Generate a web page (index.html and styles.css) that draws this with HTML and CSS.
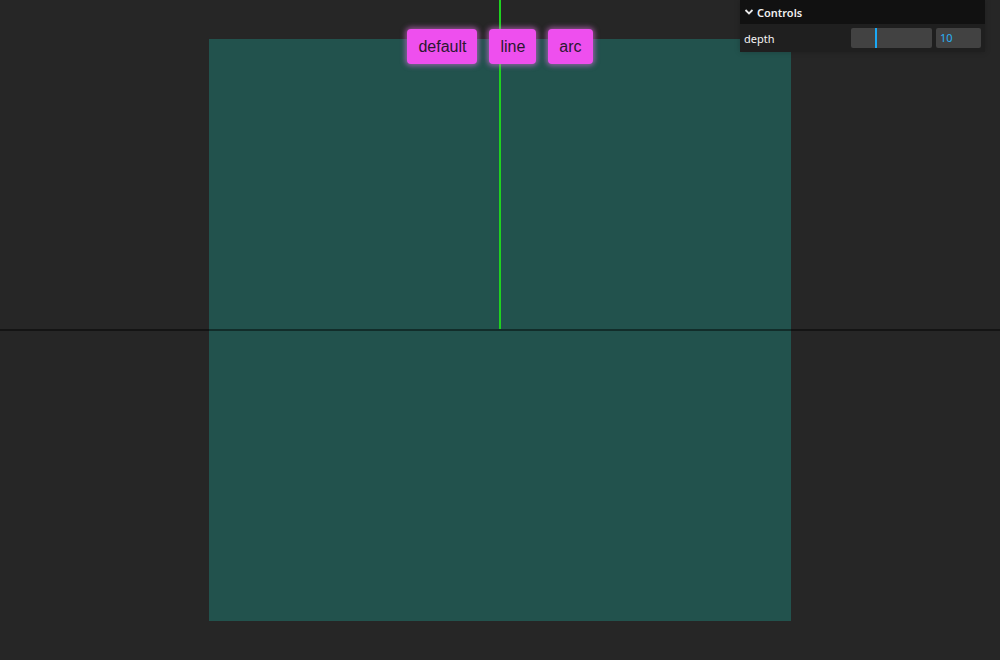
FILE: index.html
```html
<!DOCTYPE html>
<html>
<head>
<meta charset="utf-8">
<link rel="stylesheet" href="styles.css">
</head>
<body>
<div class="stage">
  <div class="square"></div>
  <div class="axis-h"></div>
  <div class="axis-v"></div>
  <div class="buttons">
    <button class="btn">default</button>
    <button class="btn">line</button>
    <button class="btn">arc</button>
  </div>
  <div class="panel">
    <div class="panel-head">
      <svg class="chev" width="10" height="10" viewBox="0 0 10 10"><path d="M1.5 3 L5 6.5 L8.5 3" fill="none" stroke="#e8e8e8" stroke-width="1.8"/></svg>
      <span>Controls</span>
    </div>
    <div class="panel-row">
      <span class="label">depth</span>
      <div class="slider"><div class="knob"></div></div>
      <div class="num">10</div>
    </div>
  </div>
</div>
</body>
</html>
```
FILE: styles.css
```css
html, body {
  margin: 0;
  padding: 0;
  width: 1000px;
  height: 660px;
  background: #262626;
  overflow: hidden;
}
.stage {
  position: relative;
  width: 1000px;
  height: 660px;
  display: flex;
  align-items: center;
  justify-content: center;
}
.square {
  width: 582px;
  height: 582px;
  background: #22524d;
}
.axis-h {
  position: absolute;
  left: 0;
  top: 329px;
  width: 1000px;
  height: 2px;
  background: rgba(0, 0, 0, 0.45);
}
.axis-v {
  position: absolute;
  left: 499px;
  top: 0;
  width: 2px;
  height: 329px;
  background: #1fd11f;
}
.buttons {
  position: absolute;
  top: 29px;
  left: 0;
  width: 1000px;
  display: flex;
  justify-content: center;
  gap: 12px;
}
.btn {
  font-family: "Liberation Sans", Arial, sans-serif;
  font-size: 16px;
  line-height: 19px;
  color: #2a1830;
  background: #ee4fee;
  border: none;
  border-radius: 4px;
  padding: 8px 11px;
  height: 35px;
  box-shadow: 0 0 5px 2px rgba(238, 120, 238, 0.5);
}
.panel {
  position: absolute;
  top: 0;
  left: 740px;
  width: 245px;
  background: #1f1f1f;
  font-family: "Noto Sans", "Open Sans", sans-serif;
  font-size: 11px;
  color: #e8e8e8;
  box-shadow: 0 0 6px rgba(0,0,0,0.2);
}
.panel-head {
  height: 24px;
  background: #111111;
  display: flex;
  align-items: center;
  gap: 3px;
  padding-left: 4px;
  font-weight: 600;
  color: #f0f0f0;
}
.chev { display: block; }
.panel-row {
  height: 28px;
  display: flex;
  align-items: center;
  padding: 0 4px;
}
.label {
  flex: 1;
  color: #f4f4f4;
}
.slider {
  position: relative;
  width: 81px;
  height: 20px;
  background: #424242;
  border-radius: 2px;
}
.knob {
  position: absolute;
  left: 24px;
  top: 0;
  width: 2px;
  height: 20px;
  background: #1aa8f5;
}
.num {
  width: 41px;
  height: 20px;
  margin-left: 4px;
  background: #424242;
  border-radius: 2px;
  color: #2ab0f5;
  line-height: 20px;
  padding-left: 4px;
}
```
